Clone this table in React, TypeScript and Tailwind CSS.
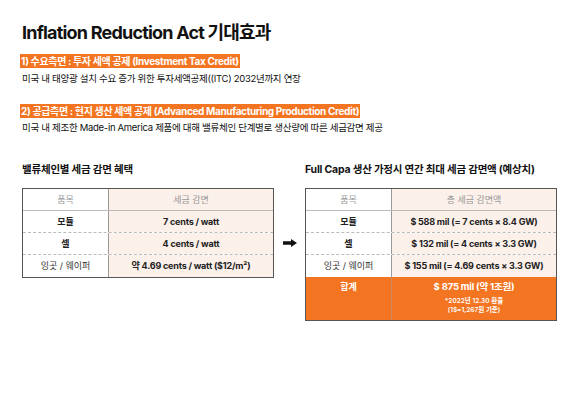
import React from 'react'

const font = { fontFamily: 'Inter, "Noto Sans CJK KR", sans-serif' }

function Row({ label, value, last }: { label: string; value: string; last?: boolean }) {
  return (
    <div className={`flex h-[22px] ${last ? '' : 'border-b border-dashed border-[#bbb]'}`}>
      <div className={`w-[86px] flex items-center justify-center text-[9px] border-r border-[#999] ${last ? 'font-normal text-[#333]' : 'font-semibold text-[#222]'}`}>
        {label}
      </div>
      <div className="flex-1 flex items-center justify-center bg-[#fcf0ea] text-[9px] tracking-[-0.2px] font-bold text-[#222]">
        {value}
      </div>
    </div>
  )
}

function Header({ right }: { right: string }) {
  return (
    <div className="flex h-[22px] border-b border-[#bbb]">
      <div className="w-[86px] flex items-center justify-center text-[9px] text-[#999] border-r border-[#999]">품목</div>
      <div className="flex-1 flex items-center justify-center bg-[#fcf0ea] text-[9px] text-[#999]">{right}</div>
    </div>
  )
}

export default function App() {
  return (
    <div className="w-[580px] h-[410px] bg-white text-[#111] px-[22px] pt-[20px]" style={font}>
      <h1 className="text-[18px] font-bold tracking-[-0.8px] leading-[26px]">Inflation Reduction Act 기대효과</h1>
      <div className="mt-[8px] w-fit bg-[#f47521] text-white text-[10px] font-bold tracking-[-0.35px] leading-[14px] px-[1px] -ml-[2px]">
        1) 수요측면 : 투자 세액 공제 (Investment Tax Credit)
      </div>
      <p className="text-[9.5px] tracking-[-0.3px] leading-[14px] mt-[4px] text-[#111]">
        미국 내 태양광 설치 수요 증가 위한 투자세액공제((ITC) 2032년까지 연장
      </p>
      <div className="mt-[18px] w-fit bg-[#f47521] text-white text-[10px] font-bold tracking-[-0.35px] leading-[14px] px-[1px] -ml-[2px]">
        2) 공급측면 : 현지 생산 세액 공제 (Advanced Manufacturing Production Credit)
      </div>
      <p className="text-[9.5px] tracking-[-0.3px] leading-[14px] mt-[3px] text-[#111]">
        미국 내 제조한 Made-in America 제품에 대해 밸류체인 단계별로 생산량에 따른 세금감면 제공
      </p>

      <div className="flex mt-[27px]">
        <div className="w-[252px]">
          <h2 className="text-[10.5px] font-bold tracking-[-0.2px] leading-[16px]">밸류체인별 세금 감면 혜택</h2>
          <div className="mt-[10px] border border-[#555]">
            <Header right="세금 감면" />
            <Row label="모듈" value="7 cents / watt" />
            <Row label="셀" value="4 cents / watt" />
            <Row label="잉곳 / 웨이퍼" value="약 4.69 cents / watt ($12/m²)" last />
          </div>
        </div>
        <div className="w-[31px] flex justify-center pt-[77px]">
          <svg width="14" height="8" viewBox="0 0 14 8">
            <path d="M0 2.3H8V0L14 4L8 8V5.7H0Z" fill="#111" />
          </svg>
        </div>
        <div className="w-[252px]">
          <h2 className="text-[10.5px] font-bold tracking-[-0.2px] leading-[16px] whitespace-nowrap">Full Capa 생산 가정시 연간 최대 세금 감면액 (예상치)</h2>
          <div className="mt-[10px] border border-[#555]">
            <Header right="총 세금 감면액" />
            <Row label="모듈" value="$ 588 mil (= 7 cents × 8.4 GW)" />
            <Row label="셀" value="$ 132 mil (= 4 cents × 3.3 GW)" />
            <Row label="잉곳 / 웨이퍼" value="$ 155 mil (= 4.69 cents × 3.3 GW)" last />
            <div className="flex h-[43px] bg-[#f47521] text-white">
              <div className="w-[86px] text-center text-[9px] font-semibold leading-[12px] pt-[4px] border-r border-[#c98a62]">합계</div>
              <div className="flex-1 flex flex-col items-center pt-[3px]">
                <span className="text-[9.5px] font-bold tracking-[-0.2px] leading-[14px]">$ 875 mil (약 1조원)</span>
                <span className="text-[6.5px] font-semibold leading-[9px] mt-[3px]">*2022년 12.30 환율</span>
                <span className="text-[6.5px] font-semibold leading-[9px]">(1$=1,267원 기준)</span>
              </div>
            </div>
          </div>
        </div>
      </div>
    </div>
  )
}
